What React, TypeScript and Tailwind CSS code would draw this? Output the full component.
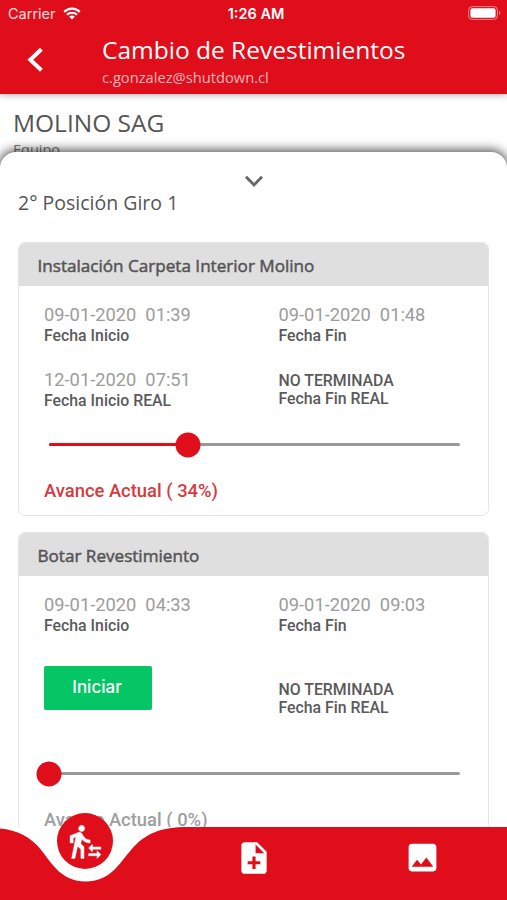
import type { ReactNode } from "react";
import { MdImage, MdNoteAdd } from "react-icons/md";

function StatusBar() {
  return (
    <div className="flex h-7 items-center justify-between pr-[6px] pl-[8px] font-['Inter','Liberation_Sans',sans-serif] text-[14px] text-white">
      <div className="flex w-[120px] items-center gap-[7px]">
        <span className="text-[14.5px] text-white/85">Carrier</span>
        <svg className="-mt-[2px]" width="18" height="13" viewBox="0 0 18 13" fill="none" stroke="white" strokeWidth="2.2">
          <path d="M1.2 4.9a11 11 0 0 1 15.6 0" />
          <path d="M4 7.8a7.1 7.1 0 0 1 10 0" />
          <path d="M9 12.6 6.2 9.8a4 4 0 0 1 5.6 0Z" fill="white" stroke="none" />
        </svg>
      </div>
      <span className="pl-[3px] text-[14.5px] font-semibold">1:26 AM</span>
      <div className="flex w-[120px] justify-end">
        <svg className="-mt-[2px]" width="33" height="14" viewBox="0 0 33 14">
          <rect x="0.6" y="0.6" width="28.8" height="12.8" rx="3.6" fill="none" stroke="white" strokeOpacity="0.5" />
          <rect x="2.4" y="2.3" width="25.2" height="9.4" rx="2" fill="white" />
          <path d="M31 5v4q1.4-.6 1.4-2T31 5Z" fill="white" fillOpacity="0.5" />
        </svg>
      </div>
    </div>
  );
}

function Header() {
  return (
    <header className="relative h-[94px] shrink-0 bg-[#e00d1a] shadow-[0_1px_7px_rgba(0,0,0,0.3)]">
      <StatusBar />
      <div className="flex">
        <div className="w-[102px] pt-[19px] pl-[26.5px]">
          <svg width="17" height="26" viewBox="0 0 17 26" fill="none" stroke="white" strokeWidth="4">
            <path d="M14.4 2.2 3.3 12.7l11.1 10.5" />
          </svg>
        </div>
        <div className="flex flex-col font-['Open_Sans',sans-serif] whitespace-nowrap text-white">
          <span className="mt-[7px] text-[24.5px] leading-[30px]">Cambio de Revestimientos</span>
          <span className="mt-[2px] text-[14.7px] leading-[20px] text-white/70">c.gonzalez@shutdown.cl</span>
        </div>
      </div>
    </header>
  );
}

function Stamp({ date, time, label }: { date: string; time: string; label: string }) {
  return (
    <div className="flex flex-col whitespace-pre">
      <span className="text-[18.3px] leading-[22px] text-[#9c9c9c]">{date + "  " + time}</span>
      <span className="text-[15.85px] leading-[19px] font-medium text-[#5a5a5a]">{label}</span>
    </div>
  );
}

function Pending() {
  return (
    <div className="flex flex-col text-[15.85px] leading-[18px] font-medium text-[#5a5a5a]">
      <span>NO TERMINADA</span>
      <span>Fecha Fin REAL</span>
    </div>
  );
}

function Slider({ value }: { value: number }) {
  return (
    <div className="relative mr-[28px] ml-[29.5px] h-[3px] rounded-full bg-[#999]">
      <div className="h-full rounded-full bg-[#e00d1a]" style={{ width: `${value}%` }} />
      <div
        className="absolute top-1/2 size-[25px] -translate-x-1/2 -translate-y-1/2 rounded-full bg-[#e00d1a]"
        style={{ left: `${value}%` }}
      />
    </div>
  );
}

function Card({ title, children }: { title: string; children: ReactNode }) {
  return (
    <section className="shrink-0 overflow-hidden rounded-[7px] border border-[#e6e6e6] bg-white pb-[13px] font-['Roboto',sans-serif]">
      <h2 className="flex h-[43px] items-center bg-[#dfdfdf] pt-[2px] pl-[18.5px] font-['Open_Sans',sans-serif] text-[17.1px] text-[#555] [-webkit-text-stroke:0.5px_#555]">
        {title}
      </h2>
      {children}
    </section>
  );
}

function WalkerIcon() {
  return (
    <svg width="37" height="37" viewBox="0 0 24 24" fill="white" stroke="white" strokeWidth="0.3">
      <path d="M16.49 15.500v-1.750L14 16.250l2.490 2.500V17H22v-1.500zM19.510 19.750H14v1.500h5.510V23L22 20.500l-2.490-2.500z" />
      <path d="M9.500 5.500c1.100 0 2-.9 2-2s-.9-2-2-2-2 .9-2 2 .9 2 2 2zM5.750 8.900 3 23h2.100l1.750-8L9 17v6h2v-7.550L8.950 13.400l.6-3C10.850 12 12.800 13 15 13v-2c-1.850 0-3.450-1-4.350-2.450l-.95-1.600C9.350 6.350 8.700 6 8 6c-.25 0-.5.05-.75.15L2 8.300V13h2V9.650l1.750-.75" />
    </svg>
  );
}

function BottomBar() {
  return (
    <nav className="absolute inset-x-0 bottom-0 h-[73px] bg-white">
      <svg className="absolute inset-0" width="507" height="73" viewBox="0 0 507 73">
        <path
          d="M0 1.5C17 3 31 10 42 24C52 37 62 54.500 85.500 54.500C110 54.500 119 37 131 23C145 6 162 0 187 0H507V73H0Z"
          fill="#e00d1a"
        />
      </svg>
      <div className="relative grid grid-cols-3 text-white">
        <div className="flex justify-center">
          <div className="-mt-[14px] flex size-[56px] items-center justify-center rounded-full bg-[#e00d1a] pl-px">
            <WalkerIcon />
          </div>
        </div>
        <div className="flex justify-center pt-[12px]">
          <MdNoteAdd size={38} />
        </div>
        <div className="flex justify-center pt-[12px]">
          <MdImage size={37} />
        </div>
      </div>
    </nav>
  );
}

export default function App() {
  return (
    <div className="relative flex h-[900px] w-[507px] flex-col overflow-hidden bg-white">
      <Header />
      <div className="flex h-[58px] shrink-0 flex-col pl-[13px] font-['Open_Sans',sans-serif] text-[#555]">
        <span className="mt-[13px] text-[24.5px] leading-[32px]">MOLINO SAG</span>
        <span className="mt-px text-[14.5px] leading-[20px] text-[#777]">Equipo</span>
      </div>
      <main className="relative flex h-[748px] shrink-0 flex-col rounded-t-[16px] bg-white px-[18px] shadow-[0_-1px_11px_1px_rgba(0,0,0,0.7)]">
        <svg className="mt-[23px] self-center" width="20" height="13" viewBox="0 0 20 13" fill="none" stroke="#666" strokeWidth="2.8">
          <path d="m2 1.800 8 8.200 8-8.200" />
        </svg>
        <h1 className="mt-px h-[53px] shrink-0 font-['Open_Sans',sans-serif] text-[19.5px] leading-[28px] text-[#555]">
          2° Posición Giro 1
        </h1>
        <div className="flex flex-col gap-4">
          <Card title="Instalación Carpeta Interior Molino">
            <div className="grid grid-cols-[234.5px_1fr] pt-[18px] pl-[25px]">
              <Stamp date="09-01-2020" time="01:39" label="Fecha Inicio" />
              <Stamp date="09-01-2020" time="01:48" label="Fecha Fin" />
            </div>
            <div className="grid grid-cols-[234.5px_1fr] pt-[24px] pb-[33px] pl-[25px]">
              <Stamp date="12-01-2020" time="07:51" label="Fecha Inicio REAL" />
              <div className="pt-[3px]">
                <Pending />
              </div>
            </div>
            <Slider value={34} />
            <p className="mt-[34px] pl-[25px] text-[18.4px] leading-[22px] font-medium text-[#d63a41]">Avance Actual ( 34%)</p>
          </Card>
          <Card title="Botar Revestimiento">
            <div className="grid grid-cols-[234.5px_1fr] pt-[18px] pl-[25px]">
              <Stamp date="09-01-2020" time="04:33" label="Fecha Inicio" />
              <Stamp date="09-01-2020" time="09:03" label="Fecha Fin" />
            </div>
            <div className="grid h-[96px] grid-cols-[234.5px_1fr] pl-[25px]">
              <button className="mt-[31px] h-[44px] w-[108px] rounded-[2px] bg-[#04c665] pr-[2px] font-['Inter',sans-serif] text-[17px] font-medium text-white">
                Iniciar
              </button>
              <div className="pt-[46px]">
                <Pending />
              </div>
            </div>
            <div className="pt-[41px]">
              <Slider value={0} />
            </div>
            <p className="mt-[34px] pl-[25px] text-[18.4px] leading-[22px] font-medium text-[#9f9f9f]">Avance Actual ( 0%)</p>
          </Card>
        </div>
      </main>
      <BottomBar />
    </div>
  );
}
